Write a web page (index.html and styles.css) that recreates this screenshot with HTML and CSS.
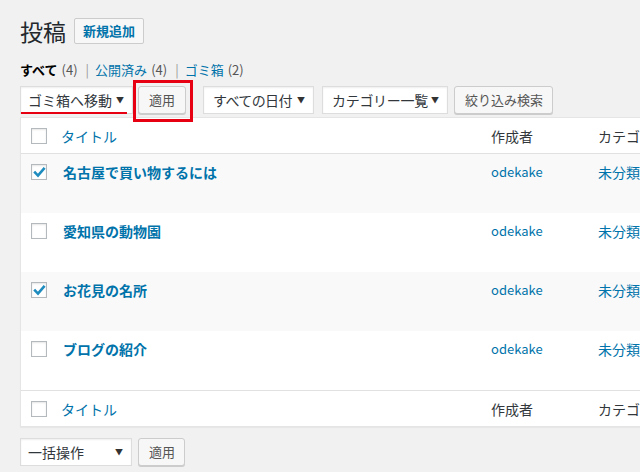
FILE: index.html
```html
<!DOCTYPE html>
<html lang="ja">
<head>
<meta charset="utf-8">
<title>投稿</title>
<link rel="stylesheet" href="styles.css">
</head>
<body>
<div class="wrap">
  <div class="heading">
    <h1>投稿</h1>
    <a class="add-new">新規追加</a>
  </div>

  <ul class="subsubsub">
    <li><span class="current">すべて</span><span class="count">(4)</span><span class="sep">|</span></li>
    <li><a>公開済み</a><span class="count">(4)</span><span class="sep">|</span></li>
    <li><a>ゴミ箱</a><span class="count">(2)</span></li>
  </ul>

  <div class="tablenav top">
    <div class="select bulk marked"><span>ゴミ箱へ移動</span><i class="arrow">▼</i></div>
    <button class="btn apply boxed">適用</button>
    <div class="select date"><span>すべての日付</span><i class="arrow">▼</i></div>
    <div class="select cat"><span>カテゴリー一覧</span><i class="arrow">▼</i></div>
    <button class="btn filter">絞り込み検索</button>
  </div>

  <div class="table">
    <div class="row head">
      <div class="cell check"><span class="cb"></span></div>
      <div class="cell title"><a>タイトル</a></div>
      <div class="cell author">作成者</div>
      <div class="cell cats">カテゴリー</div>
    </div>

    <div class="row item alt">
      <div class="cell check"><span class="cb checked"><svg viewBox="0 0 16 16" width="16" height="16"><path d="M3.2 7.6 L7 11.6 L13.6 3.8" fill="none" stroke="#1e8cbe" stroke-width="2.6" stroke-linejoin="miter"/></svg></span></div>
      <div class="cell title"><a class="post">名古屋で買い物するには</a><div class="row-actions"></div></div>
      <div class="cell author"><a>odekake</a></div>
      <div class="cell cats"><a>未分類</a></div>
    </div>

    <div class="row item">
      <div class="cell check"><span class="cb"></span></div>
      <div class="cell title"><a class="post">愛知県の動物園</a><div class="row-actions"></div></div>
      <div class="cell author"><a>odekake</a></div>
      <div class="cell cats"><a>未分類</a></div>
    </div>

    <div class="row item alt">
      <div class="cell check"><span class="cb checked"><svg viewBox="0 0 16 16" width="16" height="16"><path d="M3.2 7.6 L7 11.6 L13.6 3.8" fill="none" stroke="#1e8cbe" stroke-width="2.6" stroke-linejoin="miter"/></svg></span></div>
      <div class="cell title"><a class="post">お花見の名所</a><div class="row-actions"></div></div>
      <div class="cell author"><a>odekake</a></div>
      <div class="cell cats"><a>未分類</a></div>
    </div>

    <div class="row item">
      <div class="cell check"><span class="cb"></span></div>
      <div class="cell title"><a class="post">ブログの紹介</a><div class="row-actions"></div></div>
      <div class="cell author"><a>odekake</a></div>
      <div class="cell cats"><a>未分類</a></div>
    </div>

    <div class="row head foot">
      <div class="cell check"><span class="cb"></span></div>
      <div class="cell title"><a>タイトル</a></div>
      <div class="cell author">作成者</div>
      <div class="cell cats">カテゴリー</div>
    </div>
  </div>

  <div class="tablenav bottom">
    <div class="select bulk2"><span>一括操作</span><i class="arrow">▼</i></div>
    <button class="btn apply">適用</button>
  </div>
</div>
</body>
</html>
```

FILE: styles.css
```css
html, body {
  margin: 0;
  padding: 0;
  overflow: hidden;
}
body {
  width: 640px;
  height: 472px;
  background: #f1f1f1;
  color: #444;
  font-family: "Noto Sans CJK JP", "Noto Sans", sans-serif;
  font-size: 13px;
  line-height: 20px;
}
a {
  color: #0073aa;
  text-decoration: none;
}
.wrap {
  padding-left: 20px;
  width: 820px;
}

/* heading */
.heading {
  display: flex;
  align-items: center;
  height: 26px;
  padding-top: 18px;
}
.heading h1 {
  margin: 0;
  font-size: 23px;
  font-weight: 400;
  line-height: 26px;
  color: #23282d;
}
.add-new {
  margin-left: 8px;
  box-sizing: border-box;
  height: 26px;
  width: 70px;
  display: flex;
  align-items: center;
  justify-content: center;
  border: 1px solid #ccc;
  border-radius: 2px;
  background: #f7f7f7;
  font-weight: 700;
  font-size: 13px;
  color: #0073aa;
}

/* status links */
.subsubsub {
  list-style: none;
  margin: 16px 0 0;
  padding: 0;
  display: flex;
  height: 20px;
  font-size: 13px;
  color: #666;
}
.subsubsub li {
  display: flex;
  white-space: nowrap;
}
.subsubsub .current {
  color: #000;
  font-weight: 700;
}
.subsubsub .count {
  margin-left: 4px;
  color: #555;
}
.subsubsub .sep {
  margin: 0 6px 0 8px;
  color: #999;
}

/* tablenav */
.tablenav {
  display: flex;
  align-items: center;
  height: 28px;
}
.tablenav.top {
  margin-top: 6px;
}
.tablenav.bottom {
  margin-top: 11px;
}
.select {
  position: relative;
  box-sizing: border-box;
  height: 28px;
  display: flex;
  align-items: center;
  justify-content: space-between;
  padding: 0 8px 0 7px;
  background: #fff;
  border: 1px solid #ddd;
  box-shadow: inset 0 1px 2px rgba(0,0,0,.07);
  font-size: 14px;
  color: #32373c;
  white-space: nowrap;
}
.select .arrow {
  font-style: normal;
  font-size: 8px;
  color: #333;
  line-height: 1;
}
.select.bulk { width: 113px; }
.select.date { width: 111px; margin-left: 17px; padding-left: 9px; }
.select.date span { letter-spacing: -0.6px; }
.select.cat { width: 126px; margin-left: 8px; padding-left: 9px; }
.select.cat span { letter-spacing: -0.3px; }
.select.bulk2 { width: 112px; }

.select.marked::after {
  content: "";
  position: absolute;
  left: 0;
  bottom: -1px;
  width: 106px;
  height: 2px;
  background: #e60012;
}

.btn {
  position: relative;
  box-sizing: border-box;
  height: 28px;
  padding: 0 10px;
  margin: 0;
  border: 1px solid #ccc;
  border-radius: 3px;
  background: #f7f7f7;
  box-shadow: 0 1px 0 #ccc;
  font-family: "Noto Sans CJK JP", "Noto Sans", sans-serif;
  font-size: 13px;
  line-height: 26px;
  color: #555;
  white-space: nowrap;
}
.btn.apply {
  width: 48px;
  margin-left: 5px;
}
.tablenav.bottom .btn.apply {
  margin-left: 6px;
  width: 47px;
}
.btn.filter {
  width: 99px;
  margin-left: 6px;
}
.btn.boxed::after {
  content: "";
  position: absolute;
  left: -6px;
  top: -7px;
  width: 54px;
  height: 36px;
  border: 3px solid #e60012;
  pointer-events: none;
}

/* table */
.table {
  margin-top: 3px;
  background: #fff;
  border: 1px solid #e5e5e5;
  box-shadow: 0 1px 1px rgba(0,0,0,.04);
}
.row {
  display: grid;
  grid-template-columns: 30px 430px 107px 1fr;
}
.row.head {
  height: 35px;
  align-items: center;
  font-size: 14px;
  color: #32373c;
  border-bottom: 1px solid #e1e1e1;
}
.row.foot {
  border-bottom: 0;
  border-top: 1px solid #e1e1e1;
}
.row.head .cell {
  padding-left: 10px;
  line-height: 20px;
}
.row.head .cell.check {
  padding-left: 10px;
  display: flex;
  align-items: center;
}
.row.item {
  height: 59px;
  align-items: start;
}
.row.item.alt {
  background: #f9f9f9;
}
.row.item .cell {
  padding: 8px 0 0 10px;
  line-height: 20px;
}
.row.item .cell.check {
  padding: 10px 0 0 10px;
}
.row.item .cell.title {
  padding-left: 12px;
}
.post {
  font-weight: 700;
  font-size: 14px;
}
.row-actions {
  height: 23px;
}
.cell.author, .cell.cats {
  white-space: nowrap;
}
.row.item .cell.author a {
  font-size: 13px;
}
.row.item .cell.cats a {
  font-size: 14px;
}

.cb {
  display: block;
  box-sizing: border-box;
  width: 16px;
  height: 16px;
  border: 1px solid #b4b9be;
  background: #fff;
  box-shadow: inset 0 1px 2px rgba(0,0,0,.1);
  position: relative;
}
.cb svg {
  position: absolute;
  left: -1px;
  top: -1px;
}
```
